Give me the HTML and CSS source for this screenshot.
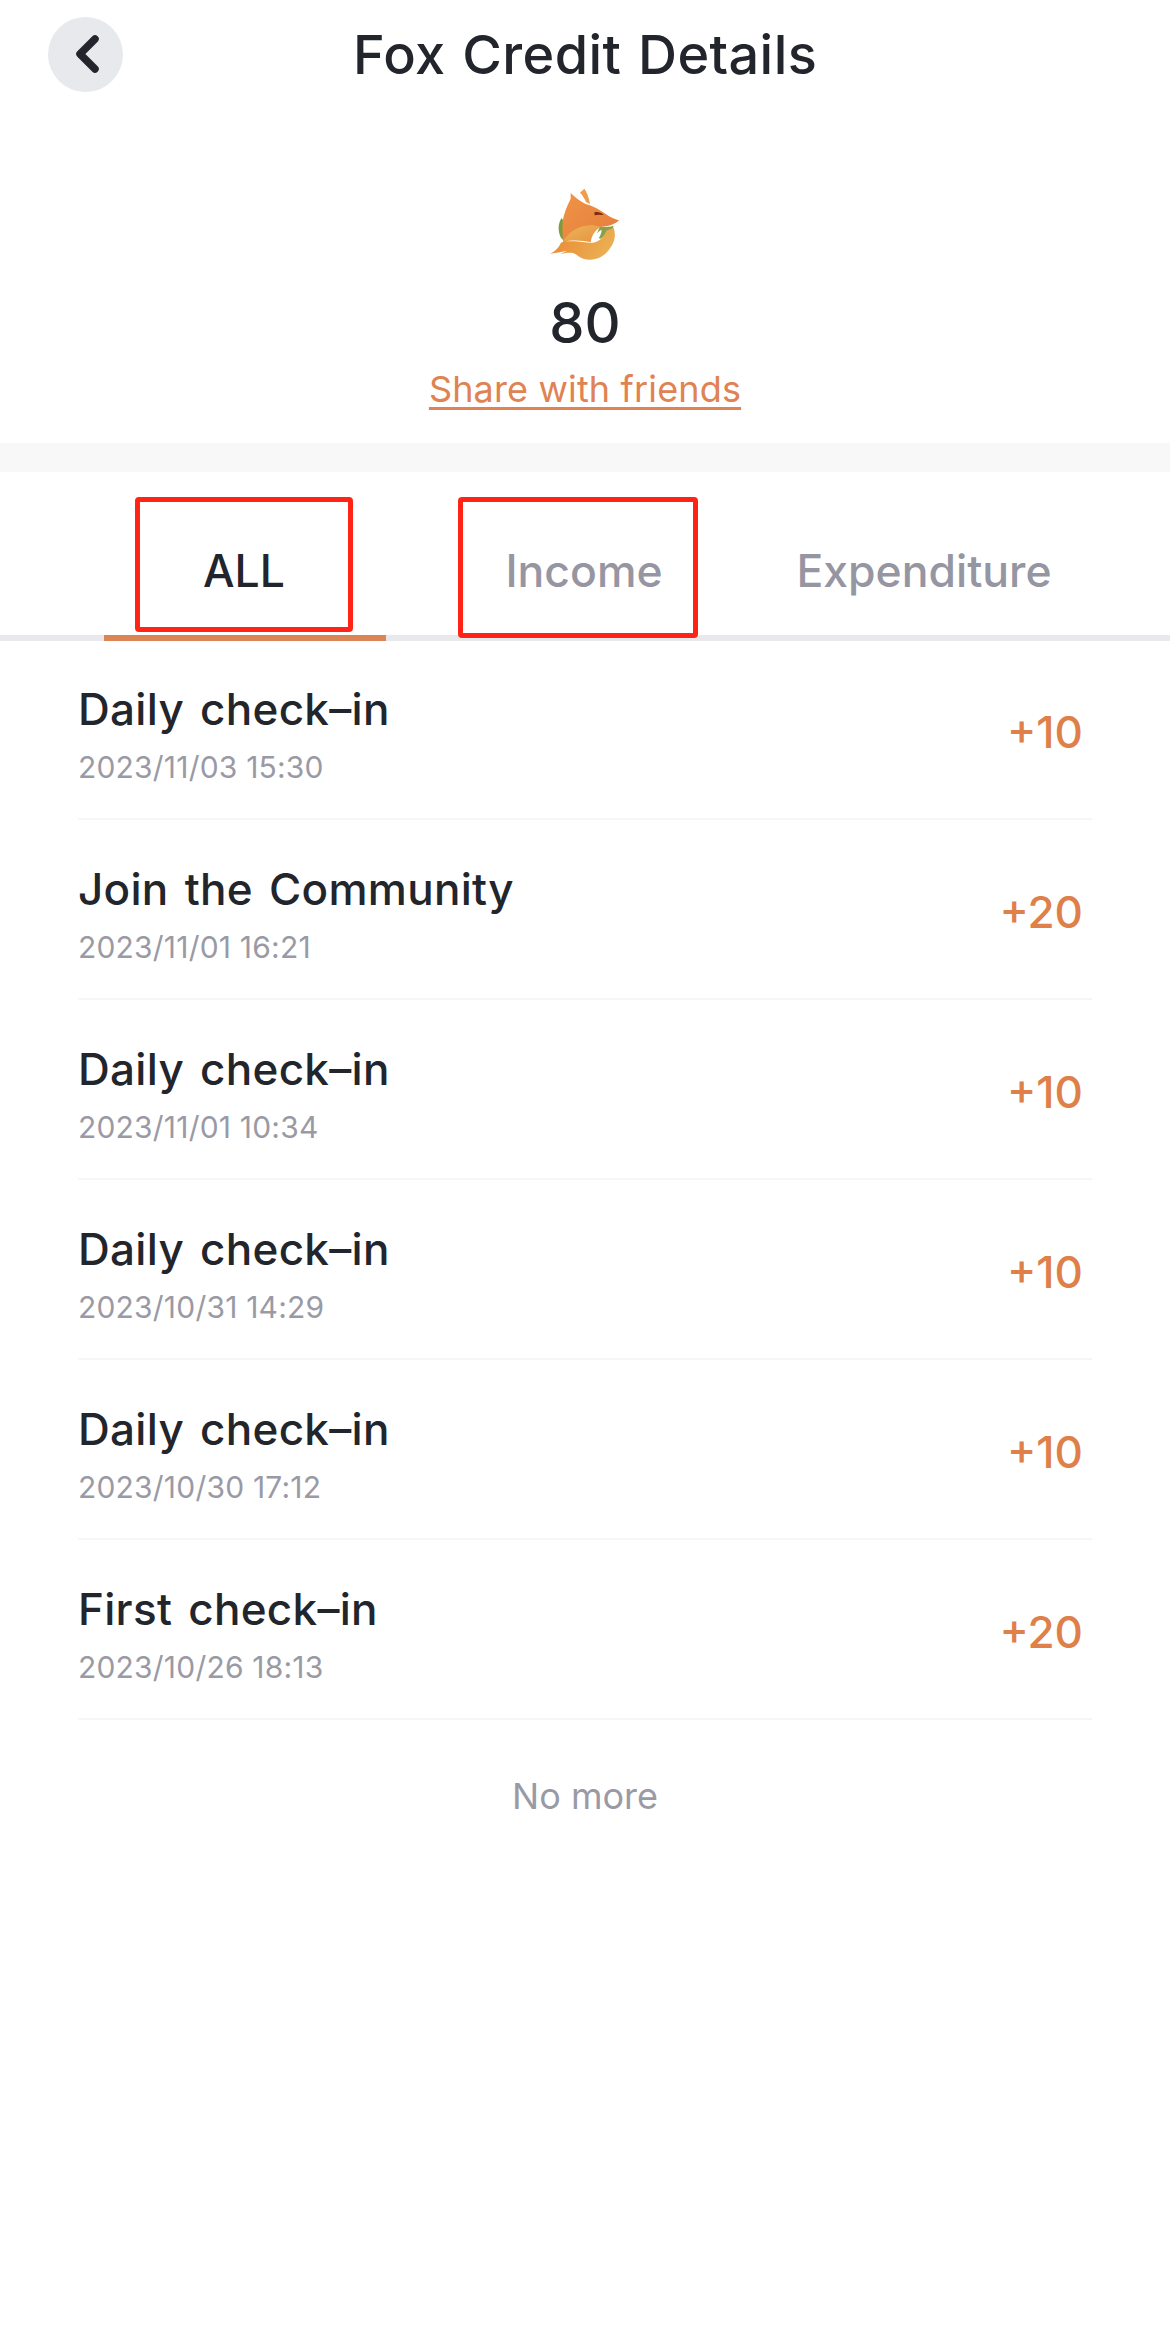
FILE: index.html
```html
<!DOCTYPE html>
<html lang="en">
<head>
<meta charset="utf-8">
<title>Fox Credit Details</title>
<link rel="stylesheet" href="styles.css">
</head>
<body>
<main class="page">
  <header class="topbar">
    <button class="back" aria-label="Back">
      <svg class="back-icon" viewBox="0 0 30 42" width="30" height="42"><path d="M24 5 9 20l15 15" fill="none" stroke="#22252b" stroke-width="7.500" stroke-linecap="round" stroke-linejoin="round"/></svg>
    </button>
    <h1 class="title">Fox Credit Details</h1>
  </header>
  <section class="summary">
    <svg class="fox" viewBox="95 50 210 222" width="70" height="74">
      <defs>
        <linearGradient id="fh" x1="0" y1="0" x2="1" y2="1"><stop offset="0" stop-color="#ee9445"/><stop offset="1" stop-color="#e67c3c"/></linearGradient>
        <linearGradient id="fb" x1="0" y1="0" x2="1" y2="1"><stop offset="0" stop-color="#e9b65e"/><stop offset="1" stop-color="#e8923c"/></linearGradient>
        <linearGradient id="ft" x1="0" y1="0" x2="1" y2="0.300"><stop offset="0" stop-color="#ea8632"/><stop offset="1" stop-color="#ebae52"/></linearGradient>
      </defs>
      <path d="M130 143c-10 14-13 36-3 58l10 12 6-50z" fill="#7d9b3f"/>
      <path d="M244 170c14 1 28 0 42-4l-6 18-35 22-10-14z" fill="#86a244"/>
      <path d="M185 67 198 55c8 10 14 27 17 46l-12-6c-4-10-10-20-18-28z" fill="#ef9c4c"/>
      <path d="M157 68c10 10 23 22 43 32 25 6 48 20 70 36 10 6 22 11 32 14-12 12-32 19-58 20-30-6-58 6-78 24-8 7-16 15-30 27-4-22-4-45-3-65 2-20 9-40 24-71z" fill="url(#fh)"/>
      <path d="M228 126c10-2 20 0 28 8l-14-1-13 2z" fill="#7a2c10"/>
      <path d="M247 170c-40-14-78 2-100 26-5 5-9 12-13 19 30-7 58-5 83 1 3-21 13-36 30-46z" fill="url(#fb)"/>
      <path d="M217 216c6-14 18-30 33-38-1 12-5 22-14 30-6 5-12 8-19 8z" fill="#fff"/>
      <path d="M95 250c14-6 26-17 33-33l6-3c24-3 52-1 80 3 14 2 38-5 50-36l22-9c7 22 4 42-10 60-14 22-36 36-60 36-20 1-32-7-44-16-14-8-22-4-48-2 8-2 15-4 21-8-17 3-33 6-50 8z" fill="url(#ft)"/>
    </svg>
    <div class="score">80</div>
    <a class="share" href="#">Share with friends</a>
  </section>
  <div class="band"></div>
  <nav class="tabs">
    <div class="tab tab-active">ALL</div>
    <div class="tab">Income</div>
    <div class="tab">Expenditure</div>
    <span class="mark mark-all"></span>
    <span class="mark mark-income"></span>
  </nav>
  <ul class="list">
    <li class="row"><div class="info"><div class="name">Daily check–in</div><div class="time">2023/11/03 15:30</div></div><div class="amount">+10</div></li>
    <li class="row"><div class="info"><div class="name">Join the Community</div><div class="time">2023/11/01 16:21</div></div><div class="amount">+20</div></li>
    <li class="row"><div class="info"><div class="name">Daily check–in</div><div class="time">2023/11/01 10:34</div></div><div class="amount">+10</div></li>
    <li class="row"><div class="info"><div class="name">Daily check–in</div><div class="time">2023/10/31 14:29</div></div><div class="amount">+10</div></li>
    <li class="row"><div class="info"><div class="name">Daily check–in</div><div class="time">2023/10/30 17:12</div></div><div class="amount">+10</div></li>
    <li class="row"><div class="info"><div class="name">First check–in</div><div class="time">2023/10/26 18:13</div></div><div class="amount">+20</div></li>
  </ul>
  <div class="end">No more</div>
</main>
</body>
</html>
```
FILE: styles.css
```css
* { box-sizing: border-box; }
html, body { margin: 0; padding: 0; background: #fff; }
body { font-family: Inter, "Noto Sans", sans-serif; color: #22252b; }
.page { width: 1170px; height: 2333px; overflow: hidden; }

.topbar { position: relative; height: 109px; display: flex; align-items: center; justify-content: center; }
.back { position: absolute; left: 48px; top: 17px; width: 75px; height: 75px; padding: 0; border: 0; border-radius: 50%; background: #e8e9ed; display: flex; align-items: center; justify-content: center; }
.back-icon { display: block; }
.title { margin: 0; font-size: 54px; font-weight: 500; line-height: 1; letter-spacing: 0.4px; word-spacing: 2px; }

.summary { height: 334px; padding-top: 78px; display: flex; flex-direction: column; align-items: center; }
.fox { display: block; }
.score { margin-top: 27px; font-size: 56px; line-height: 70px; font-weight: 500; }
.share { margin-top: 9px; font-size: 36px; line-height: 44px; letter-spacing: 0.15px; color: #e08252; text-decoration: underline; text-decoration-thickness: 3px; text-underline-offset: 5px; }

.band { height: 29px; background: #f8f8f8; }

.tabs { position: relative; height: 169px; padding: 0 74px; display: grid; grid-template-columns: repeat(3, 340px); border-bottom: 6px solid #e8e9ec; }
.tab { display: flex; align-items: center; justify-content: center; padding-top: 34px; font-size: 44.500px; font-weight: 500; color: #9696a3; }
.tab-active { color: #22252b; position: relative; }
.tab-active::after { content: ""; position: absolute; left: 30px; right: 28px; bottom: -6px; height: 6px; background: #d98556; }
.mark { position: absolute; border: 5px solid #ff2416; border-radius: 4px; }
.mark-all { left: 135px; top: 25px; width: 218px; height: 135px; }
.mark-income { left: 458px; top: 25px; width: 240px; height: 141px; }

.list { margin: -1px 0 0; padding: 0 78px; list-style: none; }
.row { height: 180px; display: flex; align-items: center; justify-content: space-between; border-bottom: 2px solid #f6f6f7; padding-right: 9px; }
.info { padding-top: 10px; }
.name { font-size: 44px; line-height: 54px; font-weight: 500; letter-spacing: 0.3px; word-spacing: 4px; }
.time { margin-top: 12px; font-size: 30px; line-height: 38px; letter-spacing: 0.2px; color: #9a9aa5; }
.amount { padding-top: 6px; font-size: 44px; font-weight: 500; color: #df7f49; }

.end { margin-top: 54px; text-align: center; font-size: 36px; line-height: 44px; color: #9a9aa5; }
```
